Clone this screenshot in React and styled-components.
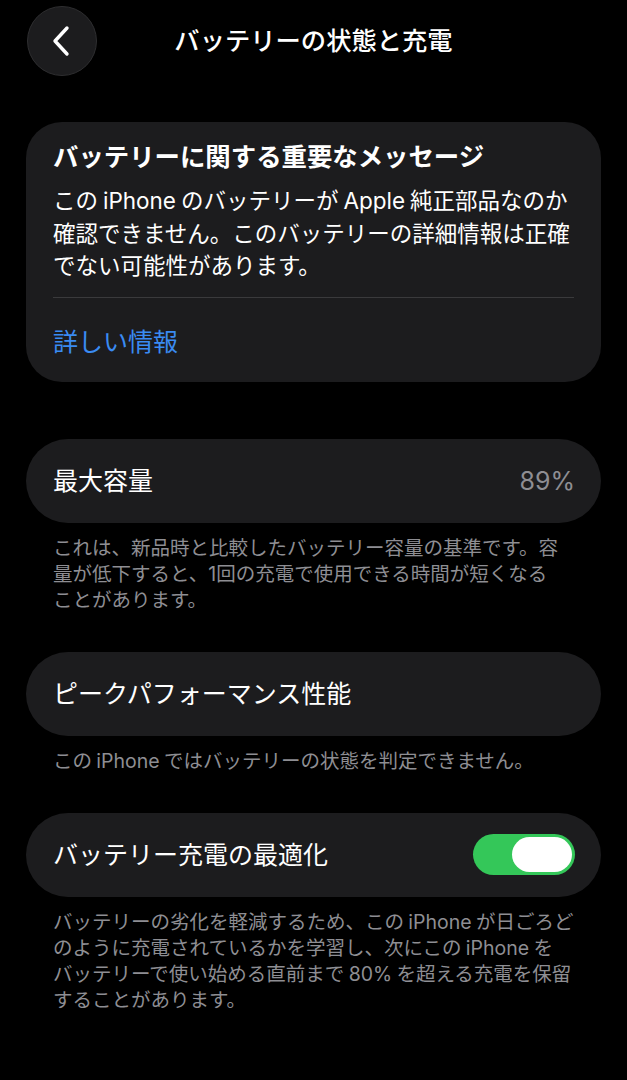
import React from 'react';
import styled, { createGlobalStyle } from 'styled-components';

const GlobalStyle = createGlobalStyle`
  html, body {
    margin: 0;
    padding: 0;
    background: #000;
  }
  body {
    font-family: 'Inter', 'Noto Sans CJK JP', sans-serif;
    color: #fff;
    -webkit-font-smoothing: antialiased;
  }
`;

const Page = styled.div`
  width: 627px;
  min-height: 1080px;
  box-sizing: border-box;
  padding: 0 26px;
  background: #000;
`;

const Header = styled.header`
  position: relative;
  height: 82px;
  display: flex;
  align-items: center;
  justify-content: center;
`;

const BackButton = styled.button`
  position: absolute;
  left: 1px;
  top: 6px;
  width: 70px;
  height: 70px;
  border-radius: 50%;
  border: 1px solid #2e2e30;
  background: #1c1c1e;
  display: flex;
  align-items: center;
  justify-content: center;
  padding: 0;
  cursor: pointer;
`;

const Title = styled.h1`
  margin: 0;
  font-size: 25.3px;
  font-weight: 500;
  line-height: 34px;
`;

// Latin words get a little air on each side, as iOS sets them in Japanese text
const Latin = styled.span`
  margin: 0 0.22em;
`;

const Card = styled.section`
  margin-top: ${(p) => p.$gap}px;
  background: #1c1c1e;
  border-radius: 36px;
  padding: 18px 27px 23px;
`;

const CardTitle = styled.h2`
  margin: 0;
  font-size: 25.4px;
  font-weight: 700;
  line-height: 34px;
  white-space: nowrap;
`;

const CardBody = styled.p`
  margin: 11px 0 0;
  font-size: 22.5px;
  line-height: 32.5px;
  white-space: nowrap;
`;

const Divider = styled.hr`
  margin: 14px 0 0;
  border: 0;
  height: 1px;
  background: #3a3a3c;
`;

const Link = styled.a`
  display: block;
  margin-top: 27px;
  font-size: 25px;
  line-height: 34px;
  color: #3a8bf2;
  text-decoration: none;
`;

const Row = styled.div`
  margin-top: ${(p) => p.$gap}px;
  height: 84px;
  box-sizing: border-box;
  background: #1c1c1e;
  border-radius: 42px;
  padding: 0 26px 0 27px;
  display: flex;
  align-items: center;
  justify-content: space-between;
`;

const RowLabel = styled.span`
  font-size: 25px;
  line-height: 34px;
`;

const RowValue = styled.span`
  font-size: 25px;
  color: #8e8e93;
`;

const Footer = styled.p`
  margin: 12px 0 0;
  padding: 0 27px;
  font-size: 19.5px;
  line-height: 26px;
  color: #8e8e93;
  white-space: nowrap;
`;

const Toggle = styled.div`
  width: 102px;
  height: 41px;
  border-radius: 21px;
  background: #34c759;
  display: flex;
  align-items: center;
  justify-content: flex-end;
  padding: 0 3px;
  box-sizing: border-box;
`;

const Knob = styled.div`
  width: 60px;
  height: 35px;
  border-radius: 18px;
  background: #fff;
`;

const App = () => (
  <Page>
    <GlobalStyle />
    <Header>
      <BackButton aria-label="戻る">
        <svg width="24" height="32" viewBox="0 0 24 32" fill="none">
          <path d="M17 3 L5 16 L17 29" stroke="#fff" strokeWidth="3.4" strokeLinecap="round" strokeLinejoin="round" />
        </svg>
      </BackButton>
      <Title>バッテリーの状態と充電</Title>
    </Header>

    <Card $gap={40}>
      <CardTitle>バッテリーに関する重要なメッセージ</CardTitle>
      <CardBody>
        この<Latin>iPhone</Latin>のバッテリーが<Latin>Apple</Latin>純正部品なのか<br />
        確認できません。このバッテリーの詳細情報は正確<br />
        でない可能性があります。
      </CardBody>
      <Divider />
      <Link href="#">詳しい情報</Link>
    </Card>

    <Row $gap={57}>
      <RowLabel>最大容量</RowLabel>
      <RowValue>89%</RowValue>
    </Row>
    <Footer>
      これは、新品時と比較したバッテリー容量の基準です。容<br />
      量が低下すると、1回の充電で使用できる時間が短くなる<br />
      ことがあります。
    </Footer>

    <Row $gap={39}>
      <RowLabel>ピークパフォーマンス性能</RowLabel>
    </Row>
    <Footer>
      この<Latin>iPhone</Latin>ではバッテリーの状態を判定できません。
    </Footer>

    <Row $gap={39}>
      <RowLabel>バッテリー充電の最適化</RowLabel>
      <Toggle>
        <Knob />
      </Toggle>
    </Row>
    <Footer>
      バッテリーの劣化を軽減するため、この<Latin>iPhone</Latin>が日ごろど<br />
      のように充電されているかを学習し、次にこの<Latin>iPhone</Latin>を<br />
      バッテリーで使い始める直前まで<Latin>80%</Latin>を超える充電を保留<br />
      することがあります。
    </Footer>
  </Page>
);

export default App;
